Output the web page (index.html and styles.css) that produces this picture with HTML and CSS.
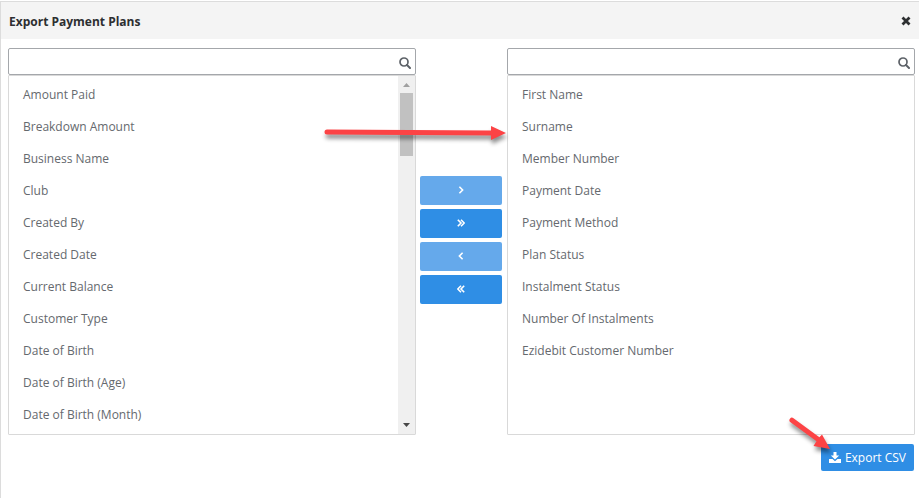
FILE: index.html
```html
<!DOCTYPE html>
<html lang="en">
<head>
    <meta charset="utf-8">
    <title>Export Payment Plans</title>
    <link rel="stylesheet" href="styles.css">
</head>
<body>
<div class="exportWindow">
    <div class="titleBar">
        <h1>Export Payment Plans</h1>
        <button type="button" class="closeBtn" aria-label="Close">
            <svg width="10" height="10" viewBox="0 0 10 10"><path d="M1.5 1.5L8.5 8.5M8.5 1.5L1.5 8.5" stroke="#2d2f31" stroke-width="2.8"/></svg>
        </button>
    </div>
    <div class="picker">
        <div class="listBox">
            <div class="searchBox">
                <input type="text" aria-label="Search available fields">
                <svg class="searchIcon" width="12" height="12" viewBox="0 0 12 12"><circle cx="5" cy="5" r="4" fill="none" stroke="#5d6268" stroke-width="1.7"/><path d="M8 8L11 11" stroke="#5d6268" stroke-width="2" stroke-linecap="round"/></svg>
            </div>
            <div class="listArea">
                <ul class="fieldList">
                    <li>Amount Paid</li>
                    <li>Breakdown Amount</li>
                    <li>Business Name</li>
                    <li>Club</li>
                    <li>Created By</li>
                    <li>Created Date</li>
                    <li>Current Balance</li>
                    <li>Customer Type</li>
                    <li>Date of Birth</li>
                    <li>Date of Birth (Age)</li>
                    <li>Date of Birth (Month)</li>
                </ul>
                <div class="scrollTrack">
                    <svg width="7" height="4" viewBox="0 0 7 4"><path d="M0 4L3.5 0L7 4Z" fill="#a0a0a0"/></svg>
                    <div class="scrollThumb"></div>
                    <svg class="scrollDown" width="7" height="4" viewBox="0 0 7 4"><path d="M0 0L3.5 4L7 0Z" fill="#484848"/></svg>
                </div>
            </div>
        </div>
        <div class="moveButtons">
            <button type="button" class="faded" aria-label="Add selected">
                <svg width="8" height="8" viewBox="0 0 10 10"><path d="M3 1L7 5L3 9"/></svg>
            </button>
            <button type="button" aria-label="Add all">
                <svg width="8" height="8" viewBox="0 0 10 10"><path d="M1 1L5 5L1 9M5 1L9 5L5 9"/></svg>
            </button>
            <button type="button" class="faded" aria-label="Remove selected">
                <svg width="8" height="8" viewBox="0 0 10 10"><path d="M7 1L3 5L7 9"/></svg>
            </button>
            <button type="button" aria-label="Remove all">
                <svg width="8" height="8" viewBox="0 0 10 10"><path d="M5 1L1 5L5 9M9 1L5 5L9 9"/></svg>
            </button>
        </div>
        <div class="listBox">
            <div class="searchBox">
                <input type="text" aria-label="Search export fields">
                <svg class="searchIcon" width="12" height="12" viewBox="0 0 12 12"><circle cx="5" cy="5" r="4" fill="none" stroke="#5d6268" stroke-width="1.7"/><path d="M8 8L11 11" stroke="#5d6268" stroke-width="2" stroke-linecap="round"/></svg>
            </div>
            <div class="listArea">
                <ul class="fieldList">
                    <li>First Name</li>
                    <li>Surname</li>
                    <li>Member Number</li>
                    <li>Payment Date</li>
                    <li>Payment Method</li>
                    <li>Plan Status</li>
                    <li>Instalment Status</li>
                    <li>Number Of Instalments</li>
                    <li>Ezidebit Customer Number</li>
                </ul>
            </div>
        </div>
        <svg class="pointer pointerRight" width="190" height="30" viewBox="0 0 190 30"><path d="M4 7.500A2.500 2.500 0 0 0 4 12.500L168 13.500V18L183 11L168 4V8.500Z"/></svg>
    </div>
    <div class="footer">
        <button type="button" class="exportBtn">
            <svg width="12" height="11" viewBox="0 0 12 11" fill="#fff"><path d="M4.500 0H7.500V3.500H10.200L6 7.600L1.800 3.500H4.500Z"/><path d="M0 7H3.500L6 9.300L8.500 7H12V11H0Z"/></svg>
            Export CSV
        </button>
        <svg class="pointer pointerDown" width="50" height="45" viewBox="0 0 50 45"><path d="M7.500 4.200A2.500 2.500 0 0 0 4.500 8.300L30.500 27.300L27.500 32L44 35L36 20.500L33.400 23.300Z"/></svg>
    </div>
</div>
</body>
</html>
```

FILE: styles.css
```css
html,body{
    margin: 0;
    background-color: white;
}
body{
    padding-top: 1px;
    font-family: "Open Sans", sans-serif;
    font-size: 12px;
    color: #65696e;
}
*{
    box-sizing: border-box;
}
button{
    font-family: inherit;
    border: none;
    padding: 0;
    cursor: pointer;
}
svg{
    display: block;
}
.exportWindow{
    min-height: calc(100vh - 1px);
    border-top: 1px solid #dcdcdc;
    border-left: 1px solid #dcdcdc;
}
.titleBar{
    display: flex;
    align-items: center;
    justify-content: space-between;
    height: 37px;
    padding: 1px 8px 0;
    background-color: #f4f4f4;
}
.titleBar h1{
    margin: 0;
    font-size: 12px;
    font-weight: bold;
    color: #2d2f31;
}
.closeBtn{
    background: none;
}
.picker{
    display: grid;
    grid-template-columns: 1fr 83px 1fr;
    gap: 4px;
    position: relative;
    padding: 9px 4px 0 7px;
}
.searchBox{
    position: relative;
}
.searchBox input{
    display: block;
    width: 100%;
    height: 27px;
    padding: 0 24px 0 8px;
    border: 1px solid #a4a7ab;
    border-radius: 2px;
    font-family: inherit;
    font-size: 12px;
}
.searchIcon{
    position: absolute;
    right: 5px;
    top: 9px;
}
.listArea{
    display: flex;
    height: 360px;
    border: 1px solid #d9d9d9;
    border-radius: 1px;
}
.fieldList{
    flex: 1;
    margin: 0;
    padding: 2px 14px;
    list-style: none;
    overflow: hidden;
}
.fieldList li{
    height: 32px;
    line-height: 33px;
}
.scrollTrack{
    display: flex;
    flex-direction: column;
    align-items: center;
    width: 17px;
    padding: 7px 0;
    background-color: #f0f0f0;
}
.scrollThumb{
    width: 13px;
    height: 63px;
    margin-top: 6px;
    background-color: #c1c1c1;
}
.scrollDown{
    margin-top: auto;
}
.moveButtons{
    display: flex;
    flex-direction: column;
    justify-content: center;
    gap: 4px;
    padding: 0 1px 4px 0;
}
.moveButtons button{
    display: flex;
    align-items: center;
    justify-content: center;
    height: 29px;
    border-radius: 2px;
    background-color: #2f8ee5;
}
.moveButtons button.faded{
    background-color: #65a9eb;
}
.moveButtons svg{
    fill: none;
    stroke: white;
    stroke-width: 2;
}
.footer{
    display: flex;
    justify-content: flex-end;
    position: relative;
    padding: 9px 5px 0 0;
}
.exportBtn{
    display: flex;
    align-items: center;
    gap: 4px;
    height: 27px;
    padding: 0 8px;
    border-radius: 2px;
    background-color: #2f8ee5;
    color: white;
    font-size: 12px;
}
.pointer{
    position: absolute;
    pointer-events: none;
    fill: #fc4345;
    filter: drop-shadow(1px 4px 2px rgba(0,0,0,0.45));
}
.pointerRight{
    right: 406px;
    top: 83px;
}
.pointerDown{
    right: 83px;
    top: -21px;
}
```
